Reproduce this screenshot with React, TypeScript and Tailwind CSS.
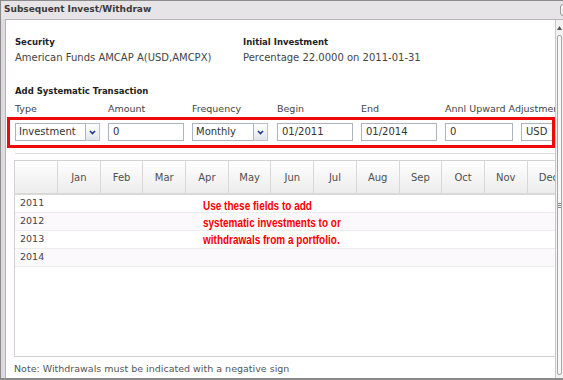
import React from 'react';

const MONTHS = ['Jan', 'Feb', 'Mar', 'Apr', 'May', 'Jun', 'Jul', 'Aug', 'Sep', 'Oct', 'Nov', 'Dec'];
const YEARS = ['2011', '2012', '2013', '2014'];

function Chevron() {
  return (
    <svg width="7" height="5" viewBox="0 0 7 5">
      <path d="M1 1 L3.5 3.6 L6 1" fill="none" stroke="#1d3a8a" strokeWidth="1.6" />
    </svg>
  );
}

function TextBox({ value, w }: { value: string; w: string }) {
  return (
    <div className={`${w} h-[18px] shrink-0 border border-[#aab5c4] bg-white pl-[4px] leading-[16px] text-[#333]`}>
      {value}
    </div>
  );
}

function SelectBox({ value, w }: { value: string; w: string }) {
  return (
    <div className={`${w} h-[18px] shrink-0 flex`}>
      <div className="flex-1 border border-[#aab5c4] bg-white pl-[3px] leading-[16px] text-[#333]">{value}</div>
      <div className="w-[14px] border border-l-0 border-[#b7c0cb] bg-gradient-to-b from-white to-[#e2e6eb] flex items-center justify-center">
        <Chevron />
      </div>
    </div>
  );
}

export default function App() {
  return (
    <div className="w-[563px] h-[380px] overflow-hidden flex flex-col bg-[#dddbdd] border-t border-l border-b-2 border-[#8b8b8b] font-['DejaVu_Sans',sans-serif]">
      {/* title bar */}
      <div className="h-[18px] shrink-0 flex items-start pt-[2px] pl-[3px] bg-[#e6e4e6]">
        <span className="text-[9px] leading-[12px] font-bold text-[#3a3a3a] whitespace-nowrap">Subsequent Invest/Withdraw</span>
        <div className="ml-auto -mr-[11px] mt-[1px] w-[14px] h-[12px] shrink-0 border border-[#9a9a9a] rounded-[3px] bg-[#f2f2f2]" />
      </div>

      <div className="flex flex-1 min-h-0 ml-[4px] border-l border-t border-[#b6b6b6] bg-white">
        {/* content */}
        <div className="w-[549px] shrink-0 overflow-hidden flex flex-col">
          <div className="pt-[16px] pl-[9px] grid grid-cols-[228px_1fr] whitespace-nowrap">
            <div>
              <div className="text-[8.5px] font-bold leading-[12px] text-[#222]">Security</div>
              <div className="mt-[4px] text-[10px] leading-[12px] text-[#444]">American Funds AMCAP A(USD,AMCPX)</div>
            </div>
            <div>
              <div className="text-[8.5px] font-bold leading-[12px] text-[#222]">Initial Investment</div>
              <div className="mt-[4px] text-[10px] leading-[12px] text-[#444]">Percentage 22.0000 on 2011-01-31</div>
            </div>
          </div>

          <div className="mt-[21px] pl-[9px] text-[8.5px] font-bold leading-[12px] text-[#222]">Add Systematic Transaction</div>

          <div className="mt-[6px] pl-[9px] flex text-[9.5px] leading-[12px] text-[#444] whitespace-nowrap">
            <span className="w-[93px] shrink-0">Type</span>
            <span className="w-[84px] shrink-0">Amount</span>
            <span className="w-[85px] shrink-0">Frequency</span>
            <span className="w-[84px] shrink-0">Begin</span>
            <span className="w-[84px] shrink-0">End</span>
            <span className="shrink-0">Annl Upward Adjustment</span>
          </div>

          <div className="mt-[2px] ml-[1px] h-[31px] shrink-0 border-[3px] border-[#ee0a0a] pt-[3px] pl-[5px] flex overflow-hidden text-[10px] whitespace-nowrap">
            <SelectBox value="Investment" w="w-[85px]" />
            <div className="ml-[8px]"><TextBox value="0" w="w-[76px]" /></div>
            <div className="ml-[8px]"><SelectBox value="Monthly" w="w-[76px]" /></div>
            <div className="ml-[9px]"><TextBox value="01/2011" w="w-[76px]" /></div>
            <div className="ml-[8px]"><TextBox value="01/2014" w="w-[76px]" /></div>
            <div className="ml-[8px]"><TextBox value="0" w="w-[68px]" /></div>
            <div className="ml-[8px]"><TextBox value="USD" w="w-[40px]" /></div>
          </div>

          <div className="mt-[5px] ml-[9px] h-px shrink-0 bg-[#dcdcdc]" />

          {/* grid */}
          <div className="relative mt-[6px] ml-[8px] w-[600px] h-[197px] shrink-0 border border-r-0 border-[#d2d2d2]">
            <div className="grid grid-cols-[43px_repeat(12,42.7px)] h-[34px] border-b-2 border-[#d9d9d9] bg-gradient-to-b from-white to-[#ececec] text-[10px] text-[#505050]">
              <div className="border-r border-[#d8d8d8]" />
              {MONTHS.map((m) => (
                <div key={m} className="border-r border-[#d8d8d8] flex items-center justify-center">
                  {m}
                </div>
              ))}
            </div>
            {YEARS.map((y, i) => (
              <div
                key={y}
                className={`h-[18px] flex items-center pl-[5px] border-b border-[#ececec] text-[9.5px] text-[#444] ${i % 2 === 1 ? 'bg-[#fcf9fc]' : 'bg-white'}`}
              >
                {y}
              </div>
            ))}
            <div className="absolute left-[188px] top-[37px] origin-left scale-x-[0.8] whitespace-nowrap font-['Liberation_Sans',sans-serif] font-bold text-[12.5px] leading-[17px] text-[#f00]">
              Use these fields to add
              <br />
              systematic investments to or
              <br />
              withdrawals from a portfolio.
            </div>
          </div>

          <div className="mt-[6px] pl-[8px] text-[9.5px] leading-[12px] text-[#555] whitespace-nowrap">
            Note: Withdrawals must be indicated with a negative sign
          </div>
        </div>

        {/* scrollbar */}
        <div className="flex-1 flex flex-col bg-[#f2f2f2] border-l border-[#c9c9c9]">
          <div className="h-[15px] shrink-0 flex items-center justify-center">
            <svg width="5" height="4" viewBox="0 0 5 4">
              <path d="M0 4 L2.5 0 L5 4 Z" fill="#555" />
            </svg>
          </div>
          <div className="flex-1 mb-[3px] mx-[1px] border border-[#a6a6a6] rounded-[2px] bg-[#f8f8f8] flex items-center justify-center">
            <div className="flex flex-col gap-[1px]">
              <div className="w-[3px] h-px bg-[#888]" />
              <div className="w-[3px] h-px bg-[#888]" />
              <div className="w-[3px] h-px bg-[#888]" />
            </div>
          </div>
        </div>
      </div>
    </div>
  );
}
